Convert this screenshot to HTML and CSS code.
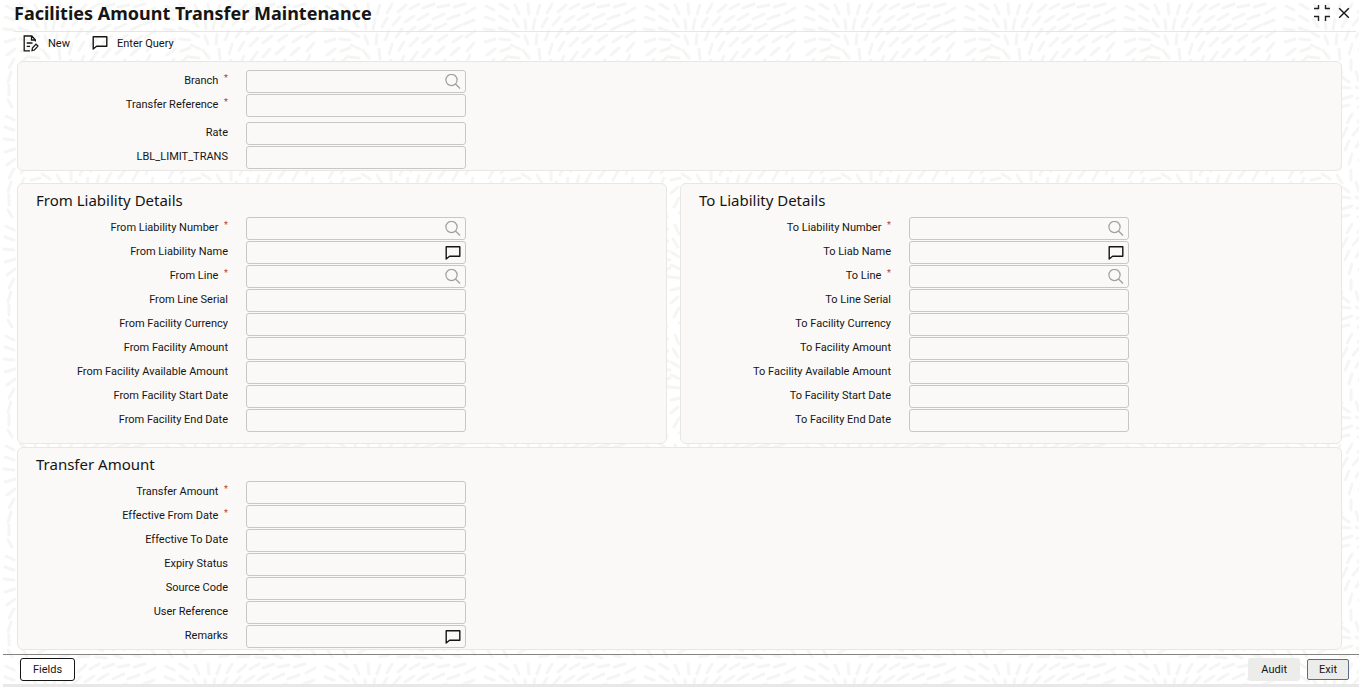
FILE: index.html
```html
<!DOCTYPE html>
<html lang="en">
<head>
  <meta charset="UTF-8">
  <meta name="viewport" content="width=device-width, initial-scale=1.0">
  <title>Facilities Amount Transfer Maintenance</title>
  <link rel="stylesheet" href="styles.css">
</head>
<body>
  <svg class="sprite" aria-hidden="true">
    <symbol id="icon-search" viewBox="0 0 16 16">
      <circle cx="6.5" cy="6" r="5.6" fill="none" stroke="currentColor" stroke-width="1.2"/>
      <path d="M10.5 10L15 14.5" fill="none" stroke="currentColor" stroke-width="1.2"/>
    </symbol>
    <symbol id="icon-note" viewBox="0 0 16 16">
      <path d="M1.2 14V1.7H14.8V11.3H4.6Z" fill="none" stroke="currentColor" stroke-width="1.4" stroke-linejoin="round"/>
    </symbol>
  </svg>

  <header class="title-bar">
    <h1>Facilities Amount Transfer Maintenance</h1>
    <div class="window-actions">
      <button type="button" class="icon-btn" aria-label="Restore">
        <svg width="18" height="18" viewBox="0 0 18 18"><path d="M1 4.5H5.5V1M12.5 1V4.5H17M1 12.5H5.5V17M12.5 17V12.5H17" fill="none" stroke="#222" stroke-width="1.4"/></svg>
      </button>
      <button type="button" class="icon-btn" aria-label="Close">
        <svg width="12" height="12" viewBox="0 0 12 12"><path d="M1.2 1.2L10.8 10.8M10.8 1.2L1.2 10.8" fill="none" stroke="#161513" stroke-width="1.4"/></svg>
      </button>
    </div>
  </header>

  <nav class="toolbar">
    <button type="button" class="tool-btn">
      <svg width="16" height="17" viewBox="0 0 16 17"><path d="M12.3 6.5V4.8L8.8 1H1.2V15.8H7M8.5 1V5H12.3M3.7 8H9.5M3.7 11.3H7" fill="none" stroke="#161513" stroke-width="1.3"/><path d="M9 15.6L9.4 13L13 9.2L15 11.1L11.4 15Z" fill="none" stroke="#161513" stroke-width="1.2"/></svg>
      New
    </button>
    <button type="button" class="tool-btn">
      <svg width="16" height="16"><use href="#icon-note"/></svg>
      Enter Query
    </button>
  </nav>

  <main class="content">
    <section class="panel panel-main">
      <div class="field"><label for="branch">Branch <sup>*</sup></label><div class="box"><input type="text" id="branch"><button type="button" class="lov" aria-label="Search branch"><svg width="16" height="16"><use href="#icon-search"/></svg></button></div></div>
      <div class="field"><label for="transfer-ref">Transfer Reference <sup>*</sup></label><div class="box"><input type="text" id="transfer-ref"></div></div>
      <div class="field field-gap"><label for="rate">Rate</label><div class="box"><input type="text" id="rate"></div></div>
      <div class="field"><label for="limit-trans">LBL_LIMIT_TRANS</label><div class="box"><input type="text" id="limit-trans"></div></div>
    </section>

    <div class="columns">
      <section class="panel">
        <h2>From Liability Details</h2>
        <div class="field"><label for="from-number">From Liability Number <sup>*</sup></label><div class="box"><input type="text" id="from-number"><button type="button" class="lov" aria-label="Search from liability"><svg width="16" height="16"><use href="#icon-search"/></svg></button></div></div>
        <div class="field"><label for="from-name">From Liability Name</label><div class="box"><input type="text" id="from-name"><button type="button" class="lov note" aria-label="Open from liability name"><svg width="16" height="16"><use href="#icon-note"/></svg></button></div></div>
        <div class="field"><label for="from-line">From Line <sup>*</sup></label><div class="box"><input type="text" id="from-line"><button type="button" class="lov" aria-label="Search from line"><svg width="16" height="16"><use href="#icon-search"/></svg></button></div></div>
        <div class="field"><label for="from-serial">From Line Serial</label><div class="box"><input type="text" id="from-serial"></div></div>
        <div class="field"><label for="from-currency">From Facility Currency</label><div class="box"><input type="text" id="from-currency"></div></div>
        <div class="field"><label for="from-amount">From Facility Amount</label><div class="box"><input type="text" id="from-amount"></div></div>
        <div class="field"><label for="from-available">From Facility Available Amount</label><div class="box"><input type="text" id="from-available"></div></div>
        <div class="field"><label for="from-start">From Facility Start Date</label><div class="box"><input type="text" id="from-start"></div></div>
        <div class="field"><label for="from-end">From Facility End Date</label><div class="box"><input type="text" id="from-end"></div></div>
      </section>

      <section class="panel">
        <h2>To Liability Details</h2>
        <div class="field"><label for="to-number">To Liability Number <sup>*</sup></label><div class="box"><input type="text" id="to-number"><button type="button" class="lov" aria-label="Search to liability"><svg width="16" height="16"><use href="#icon-search"/></svg></button></div></div>
        <div class="field"><label for="to-name">To Liab Name</label><div class="box"><input type="text" id="to-name"><button type="button" class="lov note" aria-label="Open to liability name"><svg width="16" height="16"><use href="#icon-note"/></svg></button></div></div>
        <div class="field"><label for="to-line">To Line <sup>*</sup></label><div class="box"><input type="text" id="to-line"><button type="button" class="lov" aria-label="Search to line"><svg width="16" height="16"><use href="#icon-search"/></svg></button></div></div>
        <div class="field"><label for="to-serial">To Line Serial</label><div class="box"><input type="text" id="to-serial"></div></div>
        <div class="field"><label for="to-currency">To Facility Currency</label><div class="box"><input type="text" id="to-currency"></div></div>
        <div class="field"><label for="to-amount">To Facility Amount</label><div class="box"><input type="text" id="to-amount"></div></div>
        <div class="field"><label for="to-available">To Facility Available Amount</label><div class="box"><input type="text" id="to-available"></div></div>
        <div class="field"><label for="to-start">To Facility Start Date</label><div class="box"><input type="text" id="to-start"></div></div>
        <div class="field"><label for="to-end">To Facility End Date</label><div class="box"><input type="text" id="to-end"></div></div>
      </section>
    </div>

    <section class="panel panel-transfer">
      <h2>Transfer Amount</h2>
      <div class="field"><label for="amount">Transfer Amount <sup>*</sup></label><div class="box"><input type="text" id="amount"></div></div>
      <div class="field"><label for="effective-from">Effective From Date <sup>*</sup></label><div class="box"><input type="text" id="effective-from"></div></div>
      <div class="field"><label for="effective-to">Effective To Date</label><div class="box"><input type="text" id="effective-to"></div></div>
      <div class="field"><label for="expiry">Expiry Status</label><div class="box"><input type="text" id="expiry"></div></div>
      <div class="field"><label for="source">Source Code</label><div class="box"><input type="text" id="source"></div></div>
      <div class="field"><label for="user-ref">User Reference</label><div class="box"><input type="text" id="user-ref"></div></div>
      <div class="field"><label for="remarks">Remarks</label><div class="box"><input type="text" id="remarks"><button type="button" class="lov note" aria-label="Open remarks"><svg width="16" height="16"><use href="#icon-note"/></svg></button></div></div>
    </section>
  </main>

  <footer class="footer">
    <button type="button" class="btn btn-fields">Fields</button>
    <div class="footer-right">
      <button type="button" class="btn btn-audit">Audit</button>
      <button type="button" class="btn btn-exit">Exit</button>
    </div>
  </footer>
</body>
</html>
```
FILE: styles.css
```css
* {
  box-sizing: border-box;
}
body {
  display: flex;
  flex-direction: column;
  min-height: 100vh;
  margin: 0;
  padding-left: 3px;
  font-family: Roboto, "Noto Sans", sans-serif;
  font-size: 11px;
  color: #161513;
  background-color: #fff;
  /* scattered strokes texture */
  background-image: url("data:image/svg+xml,%3Csvg xmlns='http://www.w3.org/2000/svg' width='160' height='110'%3E%3Cpath d='M6 6l8 4M20 4l8 5M35 5l4 9M48 4l1 10M60 5l-3 9M72 4l-5 9M86 5l-8 7M99 4l-9 5M114 4l-11 4M129 5l-11 2M145 4l-11 3M155 8l-9 5M5 17l9 3M20 16l8 5M33 19l5 8M45 20l1 9M55 19l-2 10M67 18l-5 9M80 17l-7 8M94 16l-9 6M108 14l-10 6M124 14l-11 5M139 15l-11 4M154 20l-10 4M4 29l10 1M19 28l9 3M31 32l8 5M45 36l3 8M57 34l-1 10M69 31l-4 9M82 29l-6 8M95 27l-8 7M110 25l-10 6M126 24l-11 5M141 25l-10 5M155 31l-9 6M5 42l10-3M20 39l10 1M31 45l9 4M43 50l6 8M59 49l1 10M72 44l-3 10M84 42l-5 8M98 38l-8 8M112 36l-9 7M127 35l-9 6M142 36l-9 6M154 43l-7 8M7 55l8-6M21 51l9-3M29 57l10 1M42 64l8 5M57 65l5 8M71 60l0 10M84 56l-4 9M97 52l-6 9M110 49l-7 8M124 47l-8 7M139 48l-8 7M150 55l-4 9M9 68l5-9M21 63l7-7M31 70l9-2M44 75l10 2M62 77l7 5M76 72l3 9M88 68l-1 10M99 66l-3 10M111 63l-5 9M125 60l-6 8M138 61l-5 9M153 68l-2 10M8 82l3-10M20 77l4-9M31 83l7-6M44 86l10-4M60 87l10 1M76 87l8 3M89 82l5 8M103 80l1 10M115 76l-1 10M126 74l-2 10M139 75l-2 10M152 82l1 10M9 95l0-10M22 94l1-10M34 97l5-9M47 99l8-7M62 99l10-3M77 98l11 0M94 97l9 4M108 92l5 8M122 90l2 10M136 90l2 10M150 97l5 8M8 100l4 7M23 99l4 8M39 103l7-4M60 107l9-2M78 107l11-1M96 107l10 1M114 105l8 3M133 105l8 2' fill='none' stroke='%23f5f5f4' stroke-width='3' stroke-linecap='round'/%3E%3C/svg%3E");
}
button,
input {
  font: inherit;
  color: inherit;
}
button {
  padding: 0;
  border: 0;
  background: none;
  cursor: pointer;
}
svg {
  display: block;
}
.sprite {
  display: none;
}
h1,
h2 {
  font-family: "Noto Sans", sans-serif;
}
.title-bar {
  display: flex;
  align-items: center;
  justify-content: space-between;
  height: 32px;
  margin: 0 3px 0 11px;
  padding-bottom: 5px;
  border-bottom: 1px solid #e6e6e6;
}
h1 {
  margin: 0;
  font-size: 18px;
  line-height: 24px;
  font-weight: 700;
}
.window-actions {
  display: flex;
  align-items: center;
  gap: 7px;
  padding-right: 6px;
}
.toolbar {
  display: flex;
  align-items: center;
  gap: 22px;
  height: 29px;
  padding: 0 20px 7px;
}
.tool-btn {
  display: flex;
  align-items: center;
  gap: 9px;
}
.content {
  flex: 1;
  padding: 0 17px 4px 14px;
}
.panel {
  padding: 0 18px 10px;
  background-color: #faf9f8;
  border: 1px solid #e8e7e6;
  border-radius: 6px;
}
.panel-main {
  padding-top: 8px;
  padding-bottom: 0;
}
.columns {
  display: grid;
  grid-template-columns: 650fr 662fr;
  gap: 13px;
  margin: 12px 0 3px;
}
.panel-transfer {
  padding-bottom: 0;
}
h2 {
  margin: 0;
  padding: 6px 0;
  font-size: 15px;
  line-height: 21px;
  font-weight: 400;
}
.field {
  display: flex;
  align-items: flex-start;
  gap: 18px;
  height: 24px;
}
.field-gap {
  margin-top: 4px;
}
.field label {
  width: 192px;
  line-height: 22px;
  text-align: right;
  white-space: nowrap;
}
.field sup {
  margin-left: 3px;
  line-height: 16px;
  vertical-align: top;
  font-size: 9px;
  color: #b3442f;
}
.box {
  display: flex;
  align-items: center;
  width: 220px;
  height: 23px;
  padding-right: 4px;
  border: 1px solid #c8c7c6;
  border-radius: 3px;
}
.box input {
  flex: 1;
  min-width: 0;
  height: 100%;
  padding: 0 6px;
  border: 0;
  outline: 0;
  background: transparent;
}
.lov {
  color: #a19e9b;
}
.note {
  color: #161513;
}
.footer {
  display: flex;
  align-items: center;
  justify-content: space-between;
  height: 33px;
  padding: 0 10px 0 17px;
  border-top: 1px solid #85827f;
  border-bottom: 3px solid #e8e8e8;
}
.footer-right {
  display: flex;
  align-items: center;
  gap: 7px;
}
.btn {
  height: 23px;
  padding: 0 12px;
  border: 1px solid transparent;
  border-radius: 3px;
}
.btn-fields {
  background-color: #fff;
  border-color: #161513;
}
.btn-audit {
  background-color: #ececeb;
}
.btn-exit {
  height: 21px;
  padding: 0 11px;
  background-color: #ececeb;
  border-color: #5f6b8c;
  border-radius: 2px;
}
```
